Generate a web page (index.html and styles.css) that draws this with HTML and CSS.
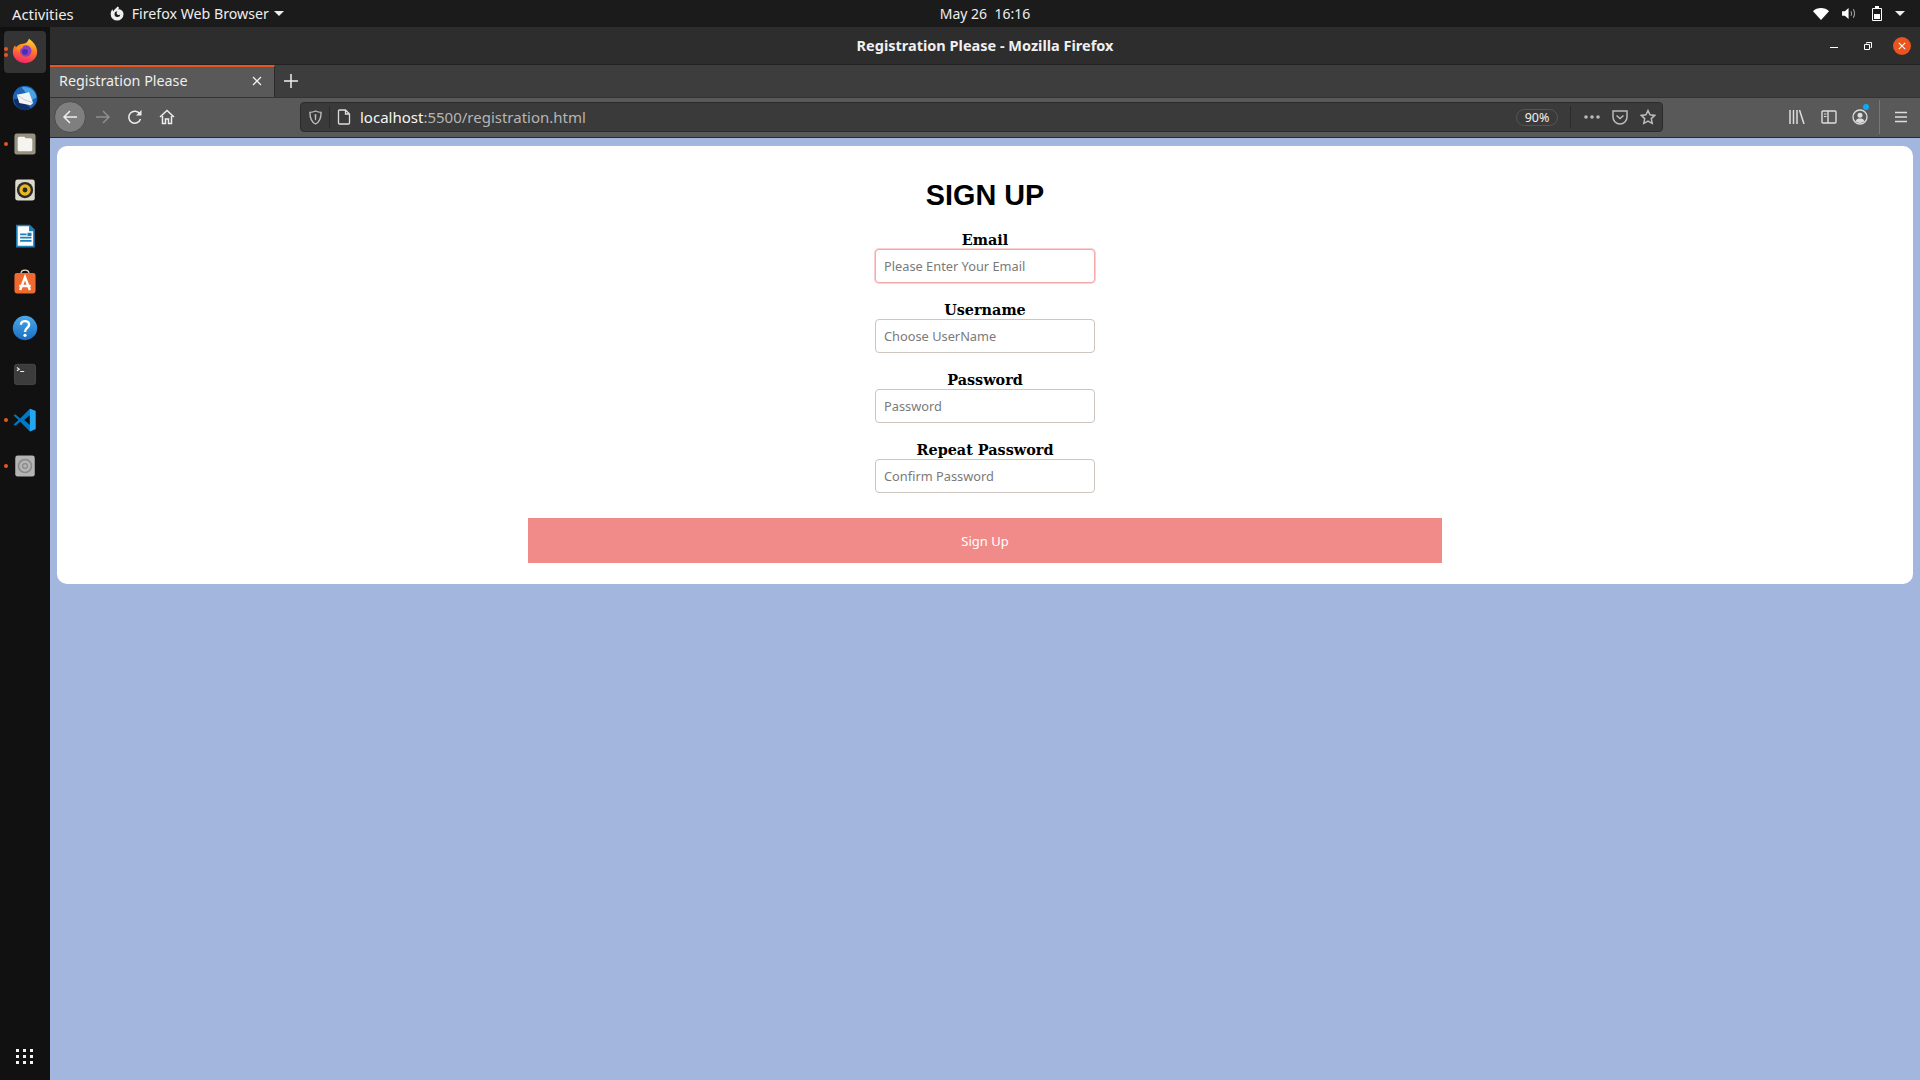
FILE: index.html
```html
<!DOCTYPE html>
<html lang="en">
<head>
    <meta charset="UTF-8">
    <title>Registration Please</title>
    <link rel="stylesheet" href="styles.css">
</head>
<body>
    <!-- GNOME top bar -->
    <header class="topbar">
        <div class="topbar-left">
            <span class="activities">Activities</span>
            <span class="app-menu">
                <svg class="app-icon" viewBox="0 0 16 16"><path fill="#eee" fill-rule="evenodd" d="M8.500 0.500c1 .5 1.500 1 1.700 1.700L8.800 3.300c3-.2 5.700 1.700 5.700 4.900a6.400 6.400 0 1 1-12.800 0c0-1.800.6-3.600 1.800-5l.6 2.300C5.200 3.800 6.800 2.500 8.500 0.500zM8.400 5.300a2.900 2.900 0 1 0 2.900 3.200c-1.200.9-3.400.5-3.700-1.300.1-.9.400-1.500.8-1.900z"/></svg>
                Firefox Web Browser
                <i class="caret"></i>
            </span>
        </div>
        <div class="clock">May 26&nbsp;&nbsp;16:16</div>
        <div class="tray">
            <svg class="tray-wifi" viewBox="0 0 16 12"><path fill="#fff" d="M8 12 0 3.200C2 1.200 4.800 0 8 0s6 1.200 8 3.200z"/></svg>
            <svg class="tray-sound" viewBox="0 0 16 14"><path fill="#fff" d="M0 4.500h3L7 1v12L3 9.500H0z"/><path fill="none" stroke="#aaa" stroke-width="1.100" d="M9.500 4.500c1 1.500 1 3.500 0 5M12 2.500c2 3 2 6 0 9"/></svg>
            <svg class="tray-battery" viewBox="0 0 10 15"><path fill="none" stroke="#fff" d="M.5 2.500h9v12h-9z"/><path fill="#fff" d="M3 0h4v2H3zM2 8h6v5H2z"/></svg>
            <i class="caret tray-caret"></i>
        </div>
    </header>

    <div class="desktop">
        <!-- Dock -->
        <aside class="dock">
            <div class="dock-item active has-two">
                <svg viewBox="0 0 32 32">
                    <defs>
                        <linearGradient id="fx" x1="0.600" y1="0" x2="0.400" y2="1"><stop offset="0" stop-color="#ffd53a"/><stop offset=".45" stop-color="#ff7a26"/><stop offset="1" stop-color="#f5236b"/></linearGradient>
                    </defs>
                    <path fill="url(#fx)" d="M21 1c5 4 10 9 10 16a15 14 0 0 1-30 0c0-3 1-6 3-8 0 2 1 3 2 3 1-3 4-5 8-5 3 0 5-2 7-6z"/>
                    <circle cx="17" cy="16" r="7" fill="#8a3fc4"/>
                    <circle cx="16" cy="17" r="3.500" fill="#4a2ea8"/>
                    <path fill="#ff8a1f" d="M5 11c3-3 8-3 10-2l-3 4c-2 0-3 2-2 4-2-1-5-3-5-6z"/>
                </svg>
            </div>
            <div class="dock-item">
                <svg viewBox="0 0 32 32">
                    <circle cx="16" cy="16" r="15" fill="#1c63b5"/>
                    <path fill="#0b2f66" d="M2 18c2 8 8 13 14 13 3 0 5-1 7-2L10 16z"/>
                    <path fill="#4aa3e0" d="M12 3c8-2 17 3 18 12l-6 4z"/>
                    <path fill="#f4f4f4" d="M6 12 21 9l5 13-3 3-14-3z"/>
                    <path fill="none" stroke="#b9c2cc" d="m6 12 9 6 11 4"/>
                </svg>
            </div>
            <div class="dock-item has-one">
                <svg viewBox="0 0 32 32">
                    <rect x="3" y="3" width="26" height="26" rx="3" fill="#97917f"/>
                    <path fill="#f6f4ee" d="M7 9a2 2 0 0 1 2-2h6l2 2h6a2 2 0 0 1 2 2v12a2 2 0 0 1-2 2H9a2 2 0 0 1-2-2z"/>
                </svg>
            </div>
            <div class="dock-item">
                <svg viewBox="0 0 32 32">
                    <rect x="4" y="3" width="24" height="26" rx="3" fill="#ddd9cd"/>
                    <circle cx="16" cy="16" r="10" fill="#2a2a26"/>
                    <circle cx="16" cy="16" r="7" fill="#e9b81e"/>
                    <circle cx="16" cy="16" r="3" fill="#2a2a26"/>
                </svg>
            </div>
            <div class="dock-item">
                <svg viewBox="0 0 32 32">
                    <path fill="#1e7fb8" d="M5 2h17l6 6v22H5z"/>
                    <path fill="#fff" d="M7 4h14v6h5v18H7z"/>
                    <path fill="#1e7fb8" d="M10 13h8v2h-8zM10 17h14v2H10zM10 21h14v2H10zM19 12h5v4h-5z"/>
                </svg>
            </div>
            <div class="dock-item">
                <svg viewBox="0 0 32 32">
                    <path fill="none" stroke="#e9dcc9" stroke-width="1.500" d="M11 6c0-6 10-6 10 0"/>
                    <rect x="3" y="5" width="26" height="25" rx="3" fill="#ee6a2f"/>
                    <path fill="none" stroke="#fff" stroke-width="3" d="m10 26 6-16 6 16M9 21h14"/>
                </svg>
            </div>
            <div class="dock-item">
                <svg viewBox="0 0 32 32">
                    <defs>
                        <linearGradient id="hp" x1="0" y1="0" x2="0" y2="1"><stop offset="0" stop-color="#4aa8ea"/><stop offset="1" stop-color="#1a6fc2"/></linearGradient>
                    </defs>
                    <circle cx="16" cy="16" r="15" fill="url(#hp)"/>
                    <path fill="none" stroke="#fff" stroke-width="3" d="M11 12c0-6 10-6 10 0 0 4-5 4-5 9"/>
                    <circle cx="16" cy="25" r="2" fill="#fff"/>
                </svg>
            </div>
            <div class="dock-item">
                <svg viewBox="0 0 32 32">
                    <rect x="3" y="4" width="26" height="25" rx="3" fill="#3c3c3c" stroke="#555" stroke-width=".800"/>
                    <path fill="none" stroke="#eee" stroke-width="1.300" d="m6 8 3 2-3 2M10 13h5"/>
                </svg>
            </div>
            <div class="dock-item has-one">
                <svg viewBox="0 0 32 32">
                    <path fill="#0078c8" d="M22 2 29 5v22l-7 3L10 18l-6 5-2-1.500L8 16 2 10.500 4 9l6 5zM22 10l-7 6 7 6z"/>
                    <path fill="#23a8f0" d="M22 2 29 5v22l-7 3z"/>
                </svg>
            </div>
            <div class="dock-item has-one">
                <svg viewBox="0 0 32 32">
                    <rect x="4" y="3" width="24" height="26" rx="3" fill="#b4b4b4"/>
                    <circle cx="16" cy="16" r="8" fill="none" stroke="#8a8a8a" stroke-width="2"/>
                    <circle cx="16" cy="16" r="3" fill="none" stroke="#8a8a8a" stroke-width="1.500"/>
                </svg>
            </div>
            <div class="dock-grid">
                <i></i><i></i><i></i><i></i><i></i><i></i><i></i><i></i><i></i>
            </div>
        </aside>

        <!-- Firefox window -->
        <div class="window">
            <div class="titlebar">
                <span class="window-title">Registration Please - Mozilla Firefox</span>
                <div class="window-controls">
                    <i class="win-min"></i>
                    <svg class="win-restore" viewBox="0 0 8 8"><path fill="none" stroke="#fff" d="M.5 2.500h5v5h-5zM2.500 1.500V.5h5v5h-1"/></svg>
                    <span class="win-close">
                        <svg viewBox="0 0 10 10"><path stroke="#fff" stroke-width="1.300" d="m1 1 8 8M9 1 1 9"/></svg>
                    </span>
                </div>
            </div>

            <div class="tabbar">
                <div class="tab">
                    <span class="tab-title">Registration Please</span>
                    <svg class="tab-close" viewBox="0 0 10 10"><path stroke="#eee" stroke-width="1.300" d="m1 1 8 8M9 1 1 9"/></svg>
                </div>
                <svg class="tab-new" viewBox="0 0 14 14"><path stroke="#eee" stroke-width="1.500" d="M7 0v14M0 7h14"/></svg>
            </div>

            <div class="toolbar">
                <div class="nav-buttons">
                    <span class="nav-back">
                        <svg viewBox="0 0 16 16"><path fill="none" stroke="#eee" stroke-width="1.500" d="M15 8H2M8 2 2 8l6 6"/></svg>
                    </span>
                    <svg class="nav-icon nav-forward" viewBox="0 0 16 16"><path fill="none" stroke="#8e8e8e" stroke-width="1.500" d="M1 8h13M8 2l6 6-6 6"/></svg>
                    <svg class="nav-icon" viewBox="0 0 16 16"><path fill="none" stroke="#eee" stroke-width="1.500" d="M13.500 10a6 6 0 1 1-.6-5"/><path fill="#eee" d="M14.500 1v5.500H9z"/></svg>
                    <svg class="nav-icon" viewBox="0 0 16 16"><path fill="none" stroke="#eee" stroke-width="1.500" d="M1 8 8 1.500 15 8M3.500 7v7.500h3V10h3v4.500h3V7"/></svg>
                </div>

                <div class="urlbar">
                    <svg class="url-shield" viewBox="0 0 14 16"><path fill="none" stroke="#bbb" stroke-width="1.500" d="M7 1c2 1 4 1.500 6 1.500 0 6-1 10-6 12.500C2 12.500 1 8.500 1 2.500 3 2.500 5 2 7 1z"/><path fill="#bbb" d="M6 4.500h2L7.600 11H6.400z"/></svg>
                    <i class="url-sep"></i>
                    <svg class="url-page" viewBox="0 0 14 16"><path fill="none" stroke="#ddd" stroke-width="1.300" d="M2.500 1h6l4 4v9a1 1 0 0 1-1 1h-9a1 1 0 0 1-1-1V2a1 1 0 0 1 1-1zM8.500 1v4h4"/></svg>
                    <span class="url-text"><span class="url-host">localhost</span>:5500/registration.html</span>
                    <span class="url-zoom">90%</span>
                    <i class="url-sep url-sep-right"></i>
                    <svg class="url-icon" viewBox="0 0 16 4"><circle cx="2" cy="2" r="1.800" fill="#bbb"/><circle cx="8" cy="2" r="1.800" fill="#bbb"/><circle cx="14" cy="2" r="1.800" fill="#bbb"/></svg>
                    <svg class="url-icon url-pocket" viewBox="0 0 16 15"><path fill="none" stroke="#bbb" stroke-width="1.500" d="M1 1h14v6a7 7 0 0 1-14 0z"/><path fill="none" stroke="#bbb" stroke-width="1.500" d="m4.500 5.500 3.500 3 3.500-3"/></svg>
                    <svg class="url-icon url-star" viewBox="0 0 16 16"><path fill="none" stroke="#bbb" stroke-width="1.500" d="m8 1.500 2 4.300 4.700.6-3.400 3.200.9 4.700L8 12l-4.200 2.300.9-4.700L1.300 6.400 6 5.800z"/></svg>
                </div>

                <div class="tools">
                    <svg class="tool-icon" viewBox="0 0 16 14"><path stroke="#ddd" stroke-width="1.500" d="M1 0v14M4.500 0v14M8 0v14M10.500 0l4.500 14"/></svg>
                    <svg class="tool-icon" viewBox="0 0 16 14"><path fill="none" stroke="#ddd" stroke-width="1.400" d="M2 1h12a1 1 0 0 1 1 1v10a1 1 0 0 1-1 1H2a1 1 0 0 1-1-1V2a1 1 0 0 1 1-1zM7 1v12"/><path stroke="#ddd" d="M3 4h2.500M3 6.500h2.500"/></svg>
                    <span class="tool-account">
                        <svg class="tool-icon" viewBox="0 0 16 16"><circle cx="8" cy="8" r="7" fill="none" stroke="#ddd" stroke-width="1.300"/><circle cx="8" cy="6.200" r="2.500" fill="#ddd"/><path fill="#ddd" d="M3.500 12c1-2 2.500-2.500 4.500-2.500s3.500.5 4.500 2.500c-1 1.300-2.600 2-4.500 2s-3.500-.7-4.500-2z"/></svg>
                        <i class="account-dot"></i>
                    </span>
                    <i class="tool-sep"></i>
                    <svg class="tool-icon tool-menu" viewBox="0 0 14 12"><path stroke="#ddd" stroke-width="1.600" d="M1 1.500h12M1 6h12M1 10.500h12"/></svg>
                </div>
            </div>

            <!-- Page content at 90% zoom -->
            <main class="page">
                <form class="card">
                    <h1 class="card-title">SIGN UP</h1>
                    <div class="field">
                        <label class="field-label">Email</label>
                        <input class="field-input is-focused" type="text" placeholder="Please Enter Your Email">
                    </div>
                    <div class="field">
                        <label class="field-label">Username</label>
                        <input class="field-input" type="text" placeholder="Choose UserName">
                    </div>
                    <div class="field">
                        <label class="field-label">Password</label>
                        <input class="field-input" type="text" placeholder="Password">
                    </div>
                    <div class="field">
                        <label class="field-label">Repeat Password</label>
                        <input class="field-input" type="text" placeholder="Confirm Password">
                    </div>
                    <button class="submit-btn" type="button">Sign Up</button>
                </form>
            </main>
        </div>
    </div>
</body>
</html>
```

FILE: styles.css
```css
/* General */
html, body {
    margin: 0;
    height: 100%;
    overflow: hidden;
}

body {
    display: flex;
    flex-direction: column;
    width: 1920px;
    height: 1080px;
    font-family: "Noto Sans", "Open Sans", sans-serif;
    background-color: #a3b6dd;
}

svg {
    display: block;
}

/* Top bar */
.topbar {
    display: grid;
    grid-template-columns: 1fr auto 1fr;
    align-items: center;
    height: 27px;
    flex-shrink: 0;
    background-color: #1b1b1b;
    color: #eeeeee;
    font-size: 14px;
}

.topbar-left {
    display: flex;
    align-items: center;
    padding-left: 12px;
}

.activities {
    margin-right: 35px;
    font-size: 14.8px;
}

.app-menu {
    display: flex;
    align-items: center;
    gap: 6px;
    font-size: 14.2px;
}

.app-icon {
    width: 16px;
    height: 16px;
    margin-right: 1px;
}

.caret {
    display: block;
    width: 0;
    height: 0;
    margin-left: -1px;
    border-left: 5px solid transparent;
    border-right: 5px solid transparent;
    border-top: 5px solid #eeeeee;
}

.clock {
    text-align: center;
    padding-left: 50px;
}

.tray {
    display: flex;
    align-items: center;
    justify-content: flex-end;
    padding-right: 15px;
}

.tray-wifi {
    width: 16px;
    height: 12px;
    margin-right: 13px;
}

.tray-sound {
    width: 15px;
    height: 13px;
    margin-right: 15px;
}

.tray-battery {
    width: 10px;
    height: 15px;
    margin-right: 13px;
}

.tray-caret {
    margin-left: 0;
}

/* Desktop */
.desktop {
    display: flex;
    flex: 1;
    min-height: 0;
}

/* Dock */
.dock {
    display: flex;
    flex-direction: column;
    width: 50px;
    flex-shrink: 0;
    background-color: #111111;
}

.dock-item {
    position: relative;
    display: flex;
    align-items: center;
    justify-content: center;
    height: 46px;
}

.dock-item svg {
    width: 26px;
    height: 26px;
}

.dock-item.active {
    margin: 4px 4px 2px 4px;
    height: 42px;
    background-color: #343434;
    border-radius: 4px;
}

.dock-item.active svg {
    margin-top: -2px;
}

.dock-item.has-one::before,
.dock-item.has-two::before {
    content: "";
    position: absolute;
    left: 4px;
    top: 21px;
    width: 4px;
    height: 4px;
    border-radius: 50%;
    background-color: #e95420;
}

.dock-item.has-two::before {
    left: 0;
    top: 16px;
    box-shadow: 0 6px 0 #e95420;
}

.dock-grid {
    display: grid;
    grid-template-columns: repeat(3, 4px);
    gap: 3px;
    margin-top: auto;
    margin-bottom: 16px;
    margin-left: 16px;
}

.dock-grid i {
    display: block;
    width: 3px;
    height: 3px;
    background-color: #f2f2f2;
}

/* Window */
.window {
    display: flex;
    flex-direction: column;
    flex: 1;
    min-width: 0;
}

.titlebar {
    position: relative;
    display: flex;
    align-items: center;
    justify-content: center;
    height: 36px;
    padding-bottom: 1px;
    flex-shrink: 0;
    background-color: #2d2d2d;
    border-bottom: 1px solid #222222;
    color: #f0f0f0;
    font-size: 14.5px;
    font-weight: 700;
}

.window-controls {
    position: absolute;
    right: 9px;
    top: 0;
    bottom: 0;
    display: flex;
    align-items: center;
}

.win-min {
    display: block;
    width: 8px;
    height: 1px;
    margin-top: 4px;
    margin-right: 26px;
    background-color: #ffffff;
}

.win-restore {
    width: 8px;
    height: 8px;
    margin-right: 21px;
}

.win-close {
    display: flex;
    align-items: center;
    justify-content: center;
    width: 18px;
    height: 18px;
    border-radius: 50%;
    background-color: #e95420;
}

.win-close svg {
    width: 8px;
    height: 8px;
}

/* Tabs */
.tabbar {
    display: flex;
    align-items: center;
    height: 31px;
    padding-bottom: 1px;
    flex-shrink: 0;
    background-color: #3d3d3d;
}

.tab {
    display: flex;
    align-items: center;
    justify-content: space-between;
    width: 225px;
    height: 32px;
    margin-bottom: -1px;
    box-sizing: border-box;
    padding: 0 12px 3px 9px;
    background-color: #595959;
    border-top: 2px solid #e95420;
    border-right: 1px solid #2b2b2b;
    color: #eeeeee;
    font-size: 14.3px;
}

.tab-close {
    width: 10px;
    height: 10px;
}

.tab-new {
    width: 14px;
    height: 14px;
    margin-left: 9px;
}

/* Toolbar */
.toolbar {
    display: flex;
    align-items: center;
    height: 41px;
    flex-shrink: 0;
    box-sizing: border-box;
    padding-bottom: 1px;
    background-color: #595959;
    border-top: 1px solid #333333;
    border-bottom: 1px solid #2a2a2a;
}

.nav-buttons {
    display: flex;
    align-items: center;
    width: 250px;
    padding-left: 4px;
    box-sizing: border-box;
}

.nav-back {
    display: flex;
    align-items: center;
    justify-content: center;
    width: 32px;
    height: 32px;
    box-sizing: border-box;
    border-radius: 50%;
    border: 1px solid #4c4c4c;
    background-color: #7f7f7f;
}

.nav-back svg {
    width: 16px;
    height: 16px;
}

.nav-icon {
    width: 16px;
    height: 16px;
    margin-right: 16px;
}

.nav-forward {
    margin-left: 9px;
}

.urlbar {
    display: flex;
    align-items: center;
    width: 1363px;
    height: 30px;
    box-sizing: border-box;
    padding: 0 6px 0 8px;
    border: 1px solid #2b2b2b;
    border-radius: 4px;
    background-color: #3a3a3a;
    color: #b5b5b5;
    font-size: 15px;
}

.url-shield {
    width: 13px;
    height: 15px;
    margin-right: 7px;
}

.url-sep {
    display: block;
    width: 1px;
    height: 22px;
    margin-right: 7px;
    background-color: #2b2b2b;
}

.url-page {
    width: 14px;
    height: 16px;
    margin-right: 9px;
}

.url-host {
    color: #f5f5f5;
}

.url-zoom {
    margin-left: auto;
    width: 42px;
    height: 17px;
    box-sizing: border-box;
    border: 1px solid #555555;
    border-radius: 9px;
    color: #f0f0f0;
    font-size: 12.5px;
    line-height: 15px;
    text-align: center;
}

.url-sep-right {
    margin: 0 13px 0 12px;
}

.url-icon {
    width: 16px;
    height: 4px;
}

.url-pocket {
    width: 16px;
    height: 15px;
    margin-left: 12px;
}

.url-star {
    width: 16px;
    height: 16px;
    margin-left: 12px;
}

.tools {
    display: flex;
    align-items: center;
    flex: 1;
    padding-left: 126px;
}

.tool-icon {
    width: 16px;
    height: 14px;
    margin-right: 15.5px;
}

.tool-account {
    position: relative;
}

.tool-account .tool-icon {
    height: 16px;
}

.account-dot {
    position: absolute;
    top: -5px;
    left: 11px;
    width: 6px;
    height: 6px;
    border-radius: 50%;
    background-color: #12a9f2;
}

.tool-sep {
    display: block;
    width: 1px;
    height: 34px;
    margin: 0 14px 0 -5px;
    background-color: #777777;
}

.tool-menu {
    width: 14px;
    height: 12px;
    margin-right: 0;
}

/* Page */
.page {
    flex: 1;
    padding: 8px 7px;
    background-color: #a3b6dd;
}

.card {
    display: flex;
    flex-direction: column;
    align-items: center;
    height: 438px;
    box-sizing: border-box;
    padding-top: 33px;
    background-color: #ffffff;
    border-radius: 10px;
}

.card-title {
    margin: 0 0 19px;
    font-family: "Liberation Sans", Arial, sans-serif;
    font-size: 28.8px;
    line-height: 33px;
    font-weight: 700;
    color: #000000;
}

.field {
    display: flex;
    flex-direction: column;
    align-items: center;
    margin-bottom: 18px;
}

.field-label {
    font-family: "DejaVu Serif", serif;
    font-size: 14.4px;
    line-height: 18px;
    font-weight: 700;
    color: #000000;
}

.field-input {
    display: block;
    width: 220px;
    height: 34px;
    box-sizing: border-box;
    padding: 0 8px;
    border: 1px solid #ccc5c0;
    border-radius: 4px;
    background-color: #ffffff;
    font-family: "Noto Sans", sans-serif;
    font-size: 12.8px;
    outline: none;
}

.field-input::placeholder {
    color: #7a7a7a;
    opacity: 1;
}

.field-input.is-focused {
    border-color: #f5a8a8;
    box-shadow: 0 0 0 1px #fbd0d0;
}

.submit-btn {
    width: 914px;
    height: 45px;
    margin-top: 7px;
    border: none;
    background-color: #f18b8a;
    color: #ffffff;
    font-family: "Noto Sans", sans-serif;
    font-size: 13px;
}
```
